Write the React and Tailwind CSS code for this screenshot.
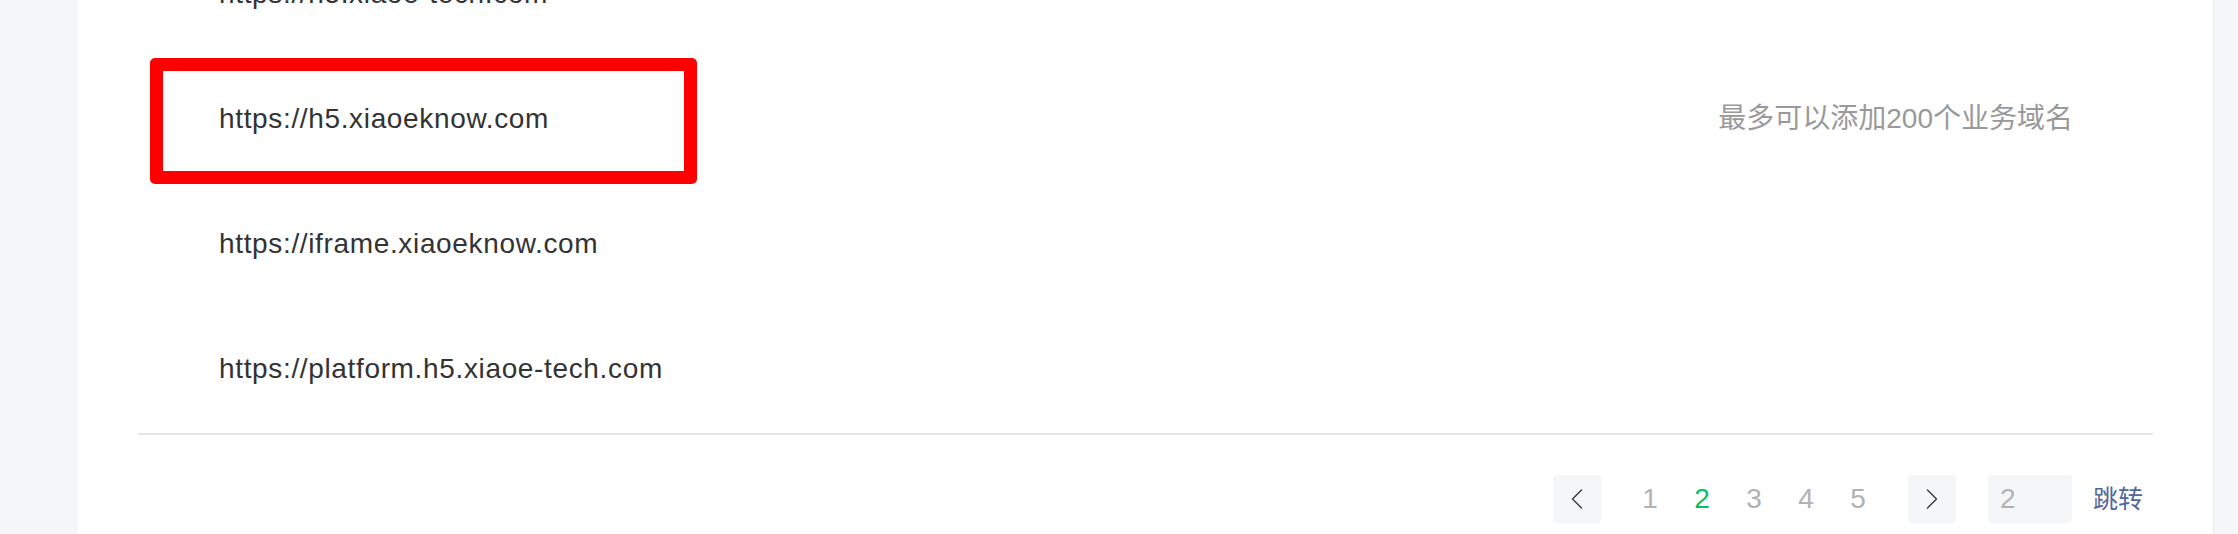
import React from 'react';

const domains = [
  'https://h5.xiaoe-tech.com',
  'https://h5.xiaoeknow.com',
  'https://iframe.xiaoeknow.com',
  'https://platform.h5.xiaoe-tech.com',
];

const Chevron = ({ dir }) => (
  <svg width="12" height="20" viewBox="0 0 12 20" fill="none">
    <path
      d={dir === 'left' ? 'M10.5 1 L1.5 10 L10.5 19' : 'M1.5 1 L10.5 10 L1.5 19'}
      stroke="#3a3a3a"
      strokeWidth="1.4"
      strokeLinejoin="round"
      strokeLinecap="round"
    />
  </svg>
);

const Pagination = ({ current = 2, pages = [1, 2, 3, 4, 5] }) => (
  <div className="flex items-center justify-end pt-[40px] pr-[10px]">
    <button className="w-[48px] h-[48px] rounded-[4px] bg-[#f5f6f7] flex items-center justify-center">
      <Chevron dir="left" />
    </button>
    <div className="flex ml-[23px]">
      {pages.map(p => (
        <span
          key={p}
          className={`w-[52px] text-center text-[28px] leading-[48px] ${
            p === current ? 'text-[#07c160]' : 'text-[#b2b2b2]'
          }`}
        >
          {p}
        </span>
      ))}
    </div>
    <button className="ml-[24px] w-[48px] h-[48px] rounded-[4px] bg-[#f5f6f7] flex items-center justify-center">
      <Chevron dir="right" />
    </button>
    <div className="ml-[32px] w-[84px] h-[48px] rounded-[4px] bg-[#f5f6f7] pl-[12px] text-[28px] leading-[48px] text-[#b2b2b2]">
      {current}
    </div>
    <span className="ml-[21px] text-[25px] leading-[48px] text-[#52679a]">跳转</span>
  </div>
);

export default function App() {
  return (
    <div
      className="w-full h-[534px] overflow-hidden flex bg-[#f5f6f8]"
      style={{ fontFamily: '"Liberation Sans", "Noto Sans CJK SC", sans-serif' }}
    >
      <div className="w-[78px] shrink-0" />
      <div className="w-[2136px] shrink-0 h-full bg-white border-r border-[#ececee] overflow-hidden">
        <div className="mx-[60px]">
          <div className="-mt-[67px] border-b-2 border-[#e6e6ea]">
            {domains.map((d, i) => (
              <div key={d} className="relative h-[125px] flex items-center justify-between pb-[4px] pl-[81px] pr-[80px]">
                {i === 1 && (
                  <div className="absolute left-[12px] top-0 w-[547px] h-[126px] border-[13px] border-[#ff0000] rounded-[5px]" />
                )}
                <span className="text-[28px] leading-[40px] tracking-[0.65px] text-[#333333]">{d}</span>
                {i === 1 && (
                  <span className="text-[28px] leading-[40px] text-[#999999]">最多可以添加200个业务域名</span>
                )}
              </div>
            ))}
          </div>
          <Pagination />
        </div>
      </div>
    </div>
  );
}
